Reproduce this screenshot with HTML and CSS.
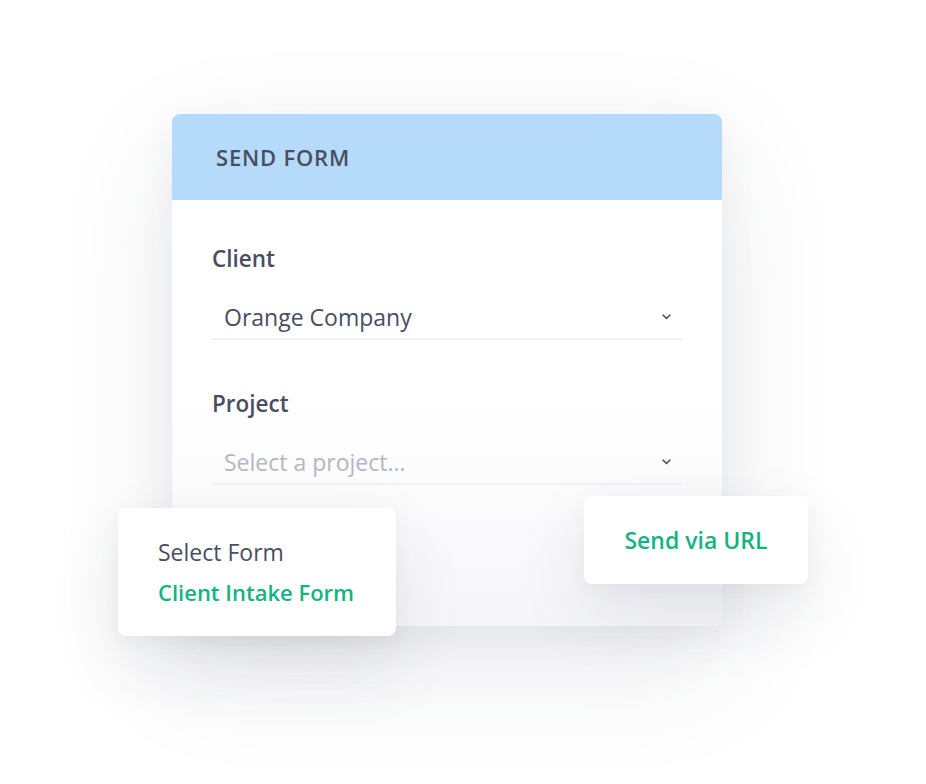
FILE: index.html
```html
<!DOCTYPE html>
<html lang="en">
<head>
    <meta charset="UTF-8">
    <title>Send Form</title>
    <link rel="stylesheet" href="styles.css">
</head>
<body>
    <div class="stage">
        <div class="form-card">
            <div class="form-header">SEND FORM</div>
            <div class="form-body">
                <div class="field">
                    <label>Client</label>
                    <div class="select">
                        <span>Orange Company</span>
                        <svg class="chevron" width="9" height="6" viewBox="0 0 9 6"><path d="M1 1l3.5 3.5 3.5-3.5" fill="none" stroke="#4a4d62" stroke-width="1.5" stroke-linecap="round" stroke-linejoin="round"/></svg>
                    </div>
                </div>
                <div class="field">
                    <label>Project</label>
                    <div class="select placeholder">
                        <span>Select a project...</span>
                        <svg class="chevron" width="9" height="6" viewBox="0 0 9 6"><path d="M1 1l3.5 3.5 3.5-3.5" fill="none" stroke="#4a4d62" stroke-width="1.5" stroke-linecap="round" stroke-linejoin="round"/></svg>
                    </div>
                </div>
            </div>

            <!-- cartes flottantes -->
            <div class="float-card pick-form">
                <div class="muted">Select Form</div>
                <div class="green intake">Client Intake Form</div>
            </div>
            <div class="float-card send-url">
                <div class="green">Send via URL</div>
            </div>
        </div>
    </div>
</body>
</html>
```

FILE: styles.css
```css
body {
    margin: 0;
    background: #ffffff;
    font-family: "Open Sans", "Liberation Sans", sans-serif;
    color: #4a4d62;
    overflow: hidden;
}

.stage {
    width: 926px;
    height: 784px;
    padding: 114px 0 0 172px;
    box-sizing: border-box;
}

.form-card {
    position: relative;
    width: 550px;
    height: 512px;
    border-radius: 8px;
    background: linear-gradient(#ffffff 55%, #f6f6f9);
    box-shadow: 0 40px 120px rgba(40, 45, 80, 0.10), 0 10px 40px rgba(40, 45, 80, 0.05);
}

.form-header {
    height: 86px;
    background: #b5dafa;
    border-radius: 8px 8px 0 0;
    padding-left: 44px;
    display: flex;
    align-items: center;
    font-size: 22px;
    font-weight: 600;
    letter-spacing: 0.8px;
    color: #4a4d62;
}

.form-body {
    padding: 40px 40px 0 40px;
    display: flex;
    flex-direction: column;
    gap: 45px;
}

.field label {
    display: block;
    font-size: 22.5px;
    font-weight: 600;
    line-height: 38px;
}

.select {
    margin-top: 22px;
    height: 38px;
    padding: 0 11px 0 12px;
    border-bottom: 2px solid #f1f1f5;
    display: flex;
    align-items: center;
    justify-content: space-between;
    font-size: 23px;
}

.select span,
.select .chevron {
    margin-top: -5px;
}

.select.placeholder {
    color: #b4b6c2;
}

.float-card {
    position: absolute;
    background: #ffffff;
    border-radius: 8px;
    box-shadow: 0 30px 70px rgba(40, 45, 80, 0.10), 0 6px 20px rgba(40, 45, 80, 0.04);
    box-sizing: border-box;
}

.pick-form {
    left: -54px;
    top: 394px;
    width: 278px;
    height: 128px;
    padding: 30px 40px;
    display: flex;
    flex-direction: column;
    gap: 12px;
}

.send-url {
    left: 412px;
    top: 382px;
    width: 224px;
    height: 88px;
    display: flex;
    align-items: center;
    justify-content: center;
}

.muted {
    font-size: 23px;
    color: #4a4d62;
    line-height: 28px;
}

.green {
    font-size: 23px;
    font-weight: 600;
    color: #14b383;
    line-height: 28px;
}

.green.intake {
    font-size: 22px;
}
```
